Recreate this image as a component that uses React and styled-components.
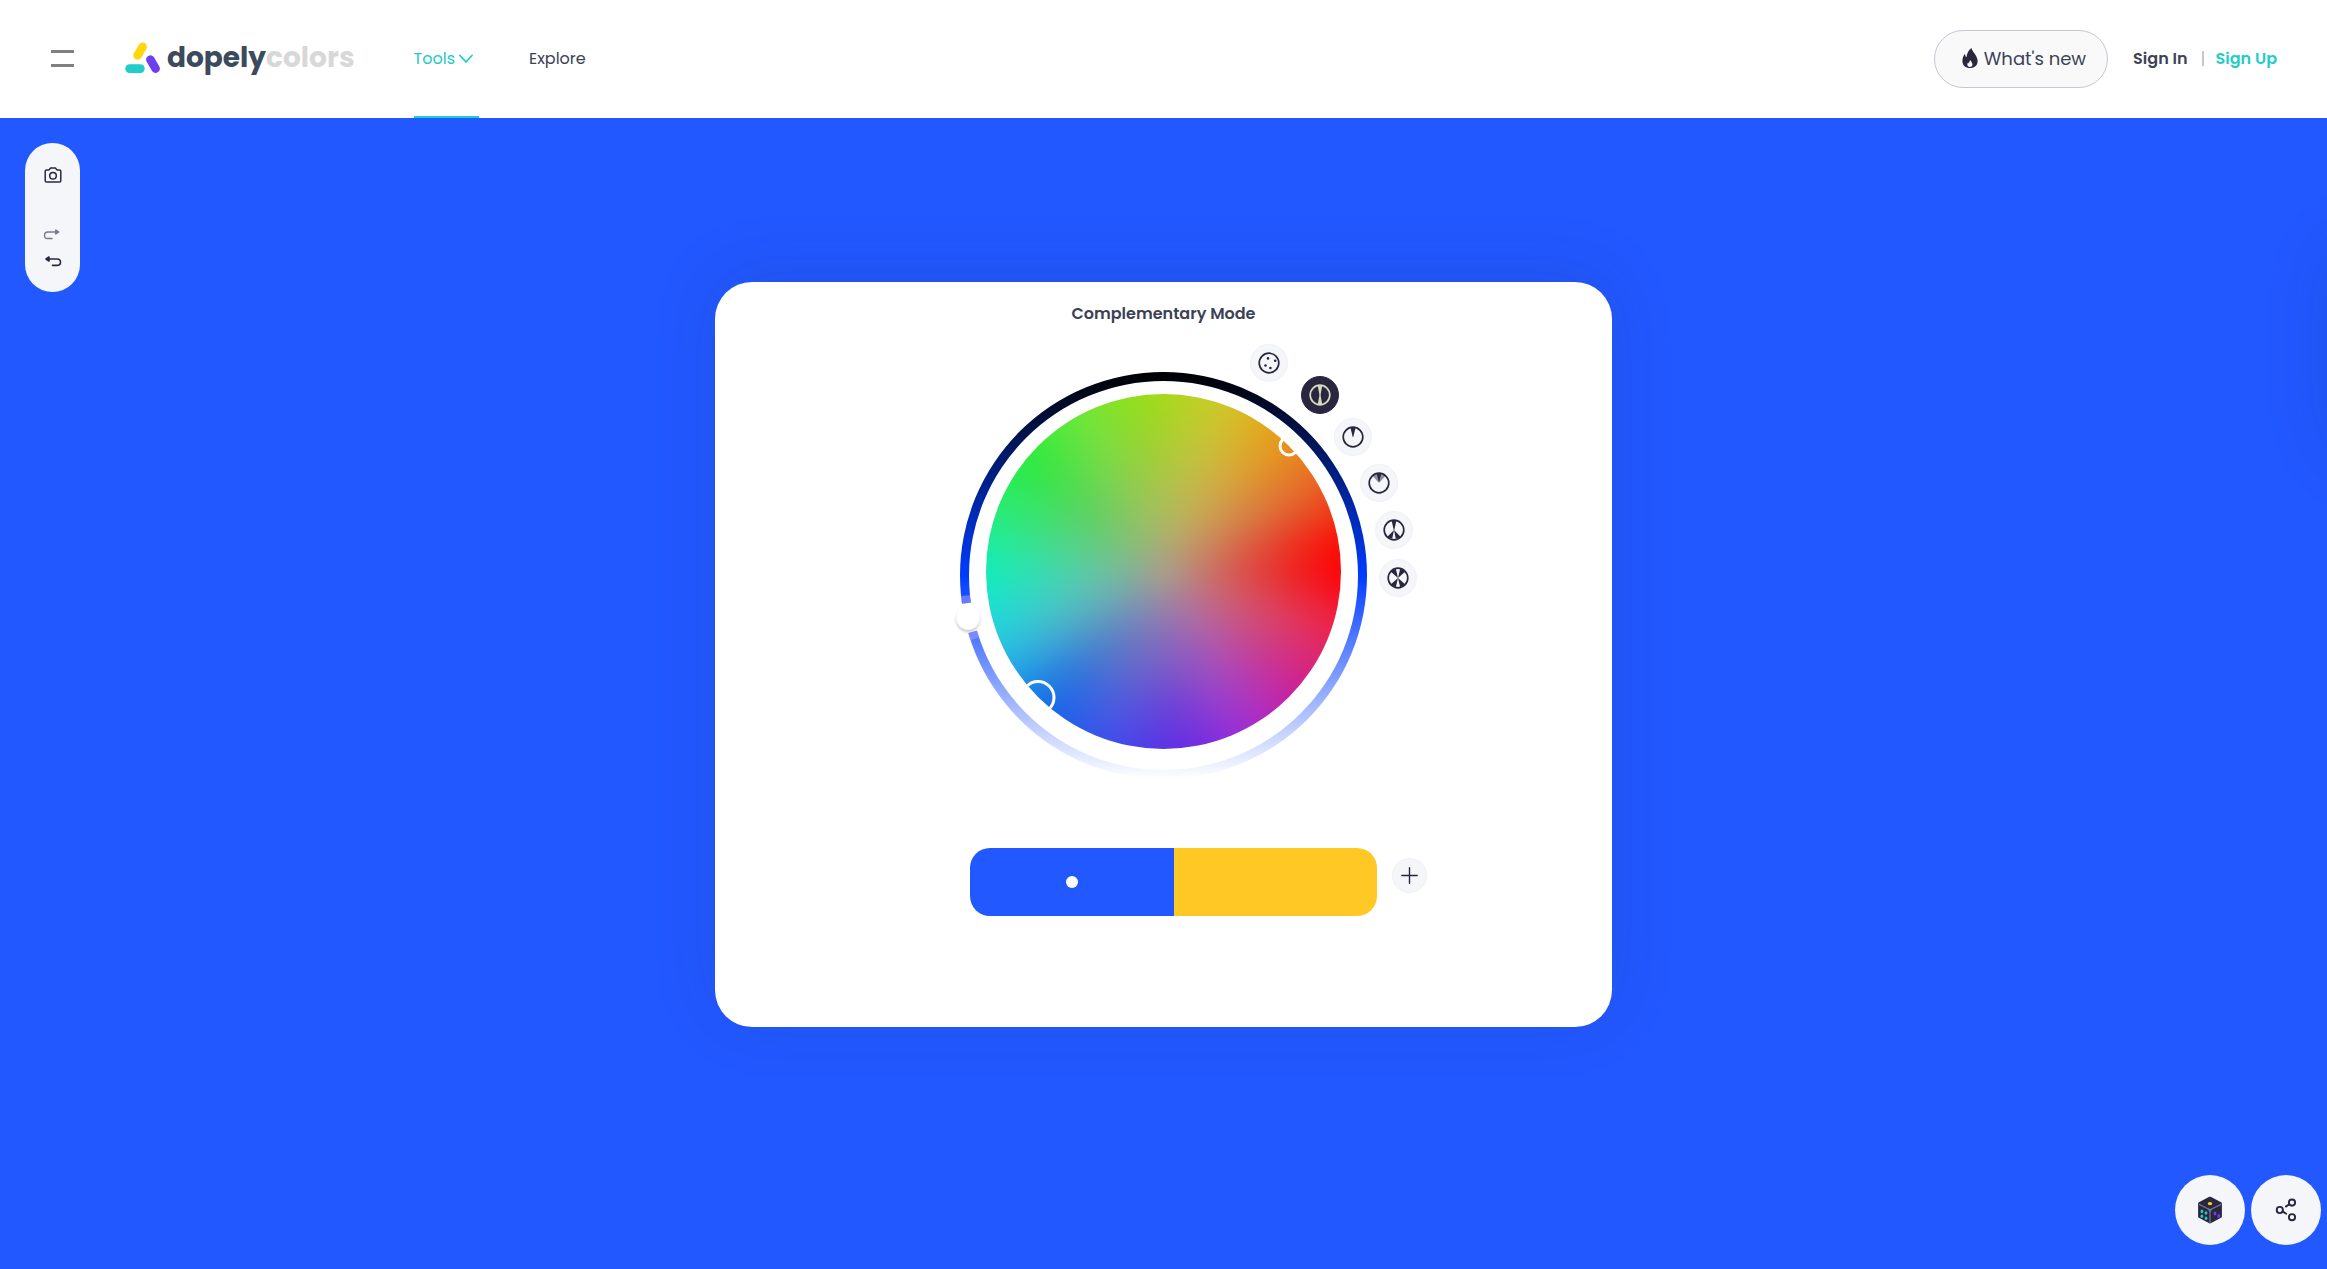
import React, { useState } from 'react'
import styled, { createGlobalStyle } from 'styled-components'

const GlobalStyle = createGlobalStyle`
    *{
        box-sizing: border-box;
    }
    body{
        margin: 0;
        background-color: #2258ff;
        font-family: Poppins, Inter, sans-serif;
        font-size: 16px;
        color: #3b4256;
    }
    a{
        color: inherit;
        text-decoration: none;
    }
    button{
        font: inherit;
        color: inherit;
        padding: 0;
        border: none;
        cursor: pointer;
    }
    svg{
        display: block;
    }
`;

const HeaderStyles = styled.header`
    height: 118px;
    padding: 0 50px 2px 51px;
    display: flex;
    align-items: center;
    background-color: white;
`;

const MenuButton = styled.button`
    width: 23px;
    height: 17px;
    margin-right: 51px;
    background: none;
    border-top: 3px solid #808080;
    border-bottom: 3px solid #808080;
`;

const Logo = styled.a`
    display: flex;
    align-items: center;
    gap: 6px;
    font-size: 28px;
    line-height: 36px;
    font-weight: 700;
    color: #3c4a5d;

    span span{
        color: #d8d8d8;
    }
`;

const Nav = styled.nav`
    align-self: stretch;
    display: flex;
    gap: 50px;
    margin: 0 0 -2px 59px;
`;

const NavItem = styled.a`
    display: flex;
    align-items: center;
    gap: 4px;
    padding-right: ${({ $active }) => ($active ? '6px' : '0')};
    border-bottom: 2px solid ${({ $active }) => ($active ? '#22ccc8' : 'transparent')};
    color: ${({ $active }) => ($active ? '#22ccc8' : 'inherit')};
`;

const Account = styled.div`
    display: flex;
    align-items: center;
    margin-left: auto;
    font-weight: 600;
`;

const WhatsNew = styled.button`
    display: flex;
    align-items: center;
    gap: 6px;
    height: 58px;
    padding: 0 21px 2px 27px;
    margin: 2px 25px 0 0;
    border: 1px solid #c3c8d2;
    border-radius: 29px;
    background-color: #f9f9f9;
    font-size: 18px;
    font-weight: 400;
`;

const Divider = styled.span`
    width: 2px;
    height: 15px;
    margin: 0 12px 0 14px;
    background-color: #c3c8d2;
`;

const SignUp = styled.a`
    color: #22ccc8;
`;

const Main = styled.main`
    position: relative;
    display: flex;
    justify-content: center;
    align-items: flex-start;
    min-height: calc(100vh - 118px);
    padding: 164px 100px 120px;
    overflow: hidden;
    background-color: #2258ff;
`;

const Toolbar = styled.div`
    position: absolute;
    top: 25px;
    left: 25px;
    width: 55px;
    height: 149px;
    padding: 23px 0 16px;
    display: flex;
    flex-direction: column;
    align-items: center;
    border-radius: 28px;
    background-color: #f5f6f9;
`;

const ToolButton = styled.button`
    background: none;
    color: #2b2640;
    margin-top: ${({ $spaced }) => ($spaced ? '37px' : '0')};
    opacity: ${({ disabled }) => (disabled ? 0.6 : 1)};

    & + &{
        padding: 3px 0;
    }
`;

const Card = styled.section`
    width: 100%;
    max-width: 897px;
    min-height: 745px;
    display: flex;
    flex-direction: column;
    align-items: center;
    border-radius: 37px;
    background-color: white;
    box-shadow: 0 -8px 65px rgba(29, 45, 90, 0.13);
`;

const ModeTitle = styled.h1`
    margin: 20px 0 46px;
    font-size: 16px;
    line-height: 24px;
    font-weight: 600;
`;

const Picker = styled.div`
    position: relative;
    width: 407px;
    height: 407px;
`;

const Wheel = styled.div`
    position: absolute;
    top: 22px;
    left: 26px;
    width: 355px;
    height: 355px;
    border-radius: 50%;
    overflow: hidden;

    &::before,
    &::after{
        content: '';
        position: absolute;
        inset: 0;
    }
    &::before{
        inset: -60px;
        filter: blur(22px);
        background: conic-gradient(
            #a5d91e 0deg,
            #d0c92d 19deg,
            #ea991a 42deg,
            #e5602c 63deg,
            #ff0000 84deg,
            #ff0000 90deg,
            #ea2d50 108deg,
            #cc2299 132deg,
            #a332d4 152deg,
            #5f2de4 176deg,
            #4155ea 200deg,
            #1169e8 222deg,
            #2fb8e2 241deg,
            #22ddd4 256deg,
            #12edbc 270deg,
            #2deb75 290deg,
            #2aea3a 311deg,
            #70e73e 332deg,
            #95dd17 352deg,
            #a5d91e 360deg
        );
    }
    &::after{
        background: radial-gradient(circle closest-side, rgba(176, 164, 143, 0.8) 0%, rgba(176, 164, 143, 0.56) 28%, rgba(176, 164, 143, 0.36) 50%, rgba(176, 164, 143, 0.15) 75%, rgba(176, 164, 143, 0) 97%);
    }
`;

const Ring = styled.svg`
    position: absolute;
    inset: 0;
    overflow: visible;
`;

const ModeButton = styled.button`
    position: absolute;
    left: ${({ $x }) => $x}px;
    top: ${({ $y }) => $y}px;
    width: 38px;
    height: 38px;
    display: flex;
    align-items: center;
    justify-content: center;
    border-radius: 50%;
    border: 1px solid ${({ $active }) => ($active ? '#2b2640' : '#f1f1f4')};
    background-color: ${({ $active }) => ($active ? '#2b2640' : '#f5f6f9')};
    color: ${({ $active }) => ($active ? '#d4d9bf' : '#2b2640')};
`;

const PaletteRow = styled.div`
    display: flex;
    gap: 15px;
    margin: 69px 0 0 70px;
`;

const Swatches = styled.div`
    display: flex;
    width: 407px;
    height: 68px;
    border-radius: 20px;
    overflow: hidden;
`;

const Swatch = styled.button`
    flex: 1;
    display: flex;
    align-items: center;
    justify-content: center;
    background-color: ${({ $color }) => $color};
`;

const Dot = styled.span`
    width: 12px;
    height: 12px;
    border-radius: 50%;
    background-color: white;
`;

const AddButton = styled.button`
    width: 35px;
    height: 35px;
    margin-top: 10px;
    display: flex;
    align-items: center;
    justify-content: center;
    border-radius: 50%;
    border: 1px solid #f0f0f3;
    background-color: #f5f6f9;
    color: #2b2640;
`;

const SidePanel = styled.aside`
    position: absolute;
    top: 130px;
    left: 100%;
    width: 300px;
    height: 220px;
    border-radius: 37px;
    box-shadow: 0 -8px 65px rgba(29, 45, 90, 0.13);
`;

const FloatingActions = styled.div`
    position: fixed;
    right: 6px;
    bottom: 24px;
    display: flex;
    gap: 6px;
`;

const RoundButton = styled.button`
    width: 70px;
    height: 70px;
    display: flex;
    align-items: center;
    justify-content: center;
    border-radius: 50%;
    background-color: #f5f6f9;
    color: #2b2640;
`;

const LogoMark = () => (
    <svg width="36" height="32" viewBox="0 0 36 32" strokeLinecap="round" strokeWidth="8.6" aria-hidden="true">
        <path d="M17.6 4.8 12.6 13.4" stroke="#ffd60a" />
        <path d="M25.4 17.6 30.6 26.6" stroke="#6c40f0" />
        <path d="M4.6 26.6H15.4" stroke="#22ccc8" />
    </svg>
)

const Chevron = () => (
    <svg width="14" height="10" viewBox="0 0 14 10" fill="none" stroke="currentColor" strokeWidth="1.8" strokeLinecap="round" strokeLinejoin="round" aria-hidden="true">
        <path d="M1 2.5 7 9 13 2.5" />
    </svg>
)

const Flame = () => (
    <svg width="16" height="20" viewBox="0 0 16 20" aria-hidden="true">
        <path fill="#2b2640" d="M9.4 0C10 3.6 15.6 7.3 15.6 13.2C15.6 17.6 12.2 20 8 20C3.6 20 .4 17.4 .4 12.9C.4 10 1.7 7.2 3 5.8C3.1 7.6 3.6 8.8 4.5 9.3C4.9 5.4 6.5 2.2 9.4 0Z" />
        <path fill="#f9f9f9" d="M8.5 12C8.6 13.4 10.5 14.4 10.5 16.6C10.5 18.1 9.4 19.1 8 19.1C6.4 19.1 5.3 18 5.3 16.6C5.3 15.6 5.7 14.8 6.2 14.3C6.3 15 6.6 15.4 7 15.6C7.1 14.2 7.6 12.9 8.5 12Z" />
    </svg>
)

const Camera = () => (
    <svg width="18" height="18" viewBox="0 0 18 18" fill="none" stroke="currentColor" strokeWidth="1.5" strokeLinejoin="round">
        <path d="M2.5 4H4.6C5.6 4 5.8 2 7 2H11C12.2 2 12.4 4 13.4 4H15.5Q16.8 4 16.8 5.3V14.7Q16.8 16 15.5 16H2.5Q1.2 16 1.2 14.7V5.3Q1.2 4 2.5 4Z" />
        <circle cx="9" cy="9.8" r="3.3" />
    </svg>
)

const Redo = () => (
    <svg width="20" height="21" viewBox="0 0 20 21" fill="none" stroke="currentColor" strokeWidth="1.4" strokeLinecap="round">
        <path d="M13.5 8H5Q1.5 8 1.5 11.5T5 14.5H9" />
        <path fill="currentColor" strokeLinejoin="round" d="M12.8 6 15.8 8 12.8 10Z" />
    </svg>
)

const Undo = () => (
    <svg width="20" height="21" viewBox="0 0 20 21" fill="none" stroke="currentColor" strokeWidth="1.6" strokeLinecap="round">
        <path d="M5.5 8H14Q17.5 8 17.5 11.2T14 14.4H9.5" />
        <path fill="currentColor" strokeLinejoin="round" d="M6 6 3 8 6 10Z" />
    </svg>
)

const Dice = () => (
    <svg width="26" height="28" viewBox="0 0 26 28" aria-hidden="true">
        <path fill="#2b2640" stroke="#2b2640" strokeWidth="3" strokeLinejoin="round" d="M13 2.2 23.4 7.6V20.4L13 26L2.6 20.4V7.6Z" />
        <path fill="none" stroke="#64778f" strokeWidth="1.3" d="M2 8.4 13 13.8 24 8.4M13 13.8V27" />
        <path fill="#64778f" d="M10 12 13 13 16 12 13.6 16H12.4Z" />
        <ellipse cx="13" cy="7.6" rx="2.3" ry="1.6" fill="#ffc91f" />
        <g fill="#22ccb8">
            <ellipse cx="4.9" cy="15.4" rx="1.4" ry="1.8" />
            <ellipse cx="9" cy="17" rx="1.4" ry="1.8" />
            <ellipse cx="4.9" cy="20.2" rx="1.4" ry="1.8" />
            <ellipse cx="9" cy="22.2" rx="1.4" ry="1.8" />
        </g>
        <g fill="#6c40f0">
            <ellipse cx="18" cy="17.5" rx="1.4" ry="1.9" />
            <ellipse cx="21.8" cy="20" rx="1.4" ry="1.9" />
        </g>
    </svg>
)

const Share = () => (
    <svg width="22" height="24" viewBox="0 0 22 24" fill="none" stroke="currentColor" strokeWidth="1.9" strokeLinecap="round" aria-hidden="true">
        <circle cx="4.8" cy="12" r="3.1" />
        <circle cx="17" cy="4.6" r="3.1" />
        <circle cx="17" cy="19.2" r="3.1" />
        <path d="M14.2 6.4 10.8 8.6M7.6 13.4 11.2 15.8" />
    </svg>
)

const glyphs = {
    Custom: (
        <g fill="currentColor">
            <circle cx="10" cy="6.4" r="1.3" />
            <circle cx="17.2" cy="8.8" r="1.3" />
            <circle cx="7.5" cy="13.5" r="1.3" />
            <circle cx="12.4" cy="16" r="1.3" />
        </g>
    ),
    Complementary: <path fill="currentColor" d="M8.7 1.4H13.3L11.7 10V12L13.3 20.6H8.7L10.3 12V10Z" />,
    Monochromatic: <path fill="currentColor" d="M8.4 1.4H13.6L11.3 11H10.7Z" />,
    Analogous: (
        <>
            <path fill="currentColor" opacity="0.5" d="M4.6 4Q11 -.6 17.4 4L11.4 10.4H10.6Z" />
            <path fill="currentColor" d="M8.8 1.4H13.2L11.3 9.5H10.7Z" />
        </>
    ),
    Triadic: <path fill="currentColor" d="M8.6 1.4H13.4L11.3 11H10.7Z M11 11 9.2 19.8 4.2 18Z M11 11 12.8 19.8 17.8 18Z" />,
    Tetradic: <path fill="currentColor" d="M11 11 3.6 4.6 8.8 1.8Z M11 11 18.4 4.6 13.2 1.8Z M11 11 3.6 17.4 8.8 20.2Z M11 11 18.4 17.4 13.2 20.2Z" />,
}

const ModeIcon = ({ name }) => (
    <svg width="22" height="22" viewBox="0 0 22 22" aria-hidden="true">
        <circle cx="11" cy="11" r="9.8" fill="none" stroke="currentColor" strokeWidth="1.7" />
        {glyphs[name]}
    </svg>
)

// offsets from the top left corner of the picker
const modes = [
    { name: 'Custom', x: 290, y: -28 },
    { name: 'Complementary', x: 341, y: 4 },
    { name: 'Monochromatic', x: 374, y: 46 },
    { name: 'Analogous', x: 400, y: 92 },
    { name: 'Triadic', x: 415, y: 139 },
    { name: 'Tetradic', x: 419, y: 187 },
]

const ringPoint = (deg) => {
    const rad = (deg * Math.PI) / 180
    return `${203.5 + 199 * Math.cos(rad)} ${203.5 + 199 * Math.sin(rad)}`
}

const arc = (from, to) => `M${ringPoint(from)}A199 199 0 0 1 ${ringPoint(to)}`

function ColorPicker({ mode, onMode }) {
  return (
    <Picker>
        <Wheel />
        <Ring width="407" height="407" viewBox="0 0 407 407" fill="none">
            <defs>
                <linearGradient id="lightness" x1="0" y1="0" x2="0" y2="1">
                    <stop offset="0" stopColor="#000" />
                    <stop offset="0.5" stopColor="#003cff" />
                    <stop offset="1" stopColor="#fff" />
                </linearGradient>
                <filter id="knobShadow" x="-50%" y="-50%" width="200%" height="200%">
                    <feDropShadow dx="0" dy="2" stdDeviation="1.5" floodOpacity="0.25" />
                </filter>
            </defs>
            <path fill="url(#lightness)" fillRule="evenodd" d="M203.5 0a203.5 203.5 0 1 1 0 407a203.5 203.5 0 1 1 0-407ZM203.5 9a194.5 194.5 0 1 0 0 389a194.5 194.5 0 1 0 0-389Z" />
            <path d={arc(161.5, 174.2)} stroke="#b0a0ff" strokeOpacity="0.5" strokeWidth="9" />
            <path d={arc(163.6, 172)} stroke="#fff" strokeWidth="11" />
            <circle cx="8" cy="246" r="11.5" fill="#fff" filter="url(#knobShadow)" />
            <circle cx="78" cy="325.5" r="16" stroke="#fff" strokeWidth="3" />
            <circle cx="329" cy="74" r="9" stroke="#fff" strokeWidth="3" />
        </Ring>
        {modes.map(({ name, x, y }) => (
            <ModeButton key={name} $x={x} $y={y} $active={name === mode} aria-label={name} onClick={() => onMode(name)}>
                <ModeIcon name={name} />
            </ModeButton>
        ))}
    </Picker>
  )
}

function Header() {
  return (
    <HeaderStyles>
        <MenuButton aria-label="Menu" />
        <Logo href="#">
            <LogoMark />
            <span>dopely<span>colors</span></span>
        </Logo>
        <Nav>
            <NavItem href="#tools" $active>Tools <Chevron /></NavItem>
            <NavItem href="#explore">Explore</NavItem>
        </Nav>
        <Account>
            <WhatsNew><Flame /> What's new</WhatsNew>
            <a href="#signin">Sign In</a>
            <Divider />
            <SignUp href="#signup">Sign Up</SignUp>
        </Account>
    </HeaderStyles>
  )
}

function App() {
  const [mode, setMode] = useState('Complementary')

  return (
    <>
        <GlobalStyle />
        <Header />
        <Main>
            <Toolbar>
                <ToolButton aria-label="Pick from photo"><Camera /></ToolButton>
                <ToolButton aria-label="Redo" $spaced disabled><Redo /></ToolButton>
                <ToolButton aria-label="Undo"><Undo /></ToolButton>
            </Toolbar>
            <Card>
                <ModeTitle>{mode} Mode</ModeTitle>
                <ColorPicker mode={mode} onMode={setMode} />
                <PaletteRow>
                    <Swatches>
                        <Swatch $color="#2258ff" aria-label="#2258FF"><Dot /></Swatch>
                        <Swatch $color="#ffc824" aria-label="#FFC824" />
                    </Swatches>
                    <AddButton aria-label="Add color">
                        <svg width="17" height="17" viewBox="0 0 17 17" stroke="currentColor" strokeWidth="1.4" strokeLinecap="round">
                            <path d="M8.5 .8V16.2M.8 8.5H16.2" />
                        </svg>
                    </AddButton>
                </PaletteRow>
            </Card>
            <SidePanel />
        </Main>
        <FloatingActions>
            <RoundButton aria-label="Random color"><Dice /></RoundButton>
            <RoundButton aria-label="Share"><Share /></RoundButton>
        </FloatingActions>
    </>
  )
}

export default App
